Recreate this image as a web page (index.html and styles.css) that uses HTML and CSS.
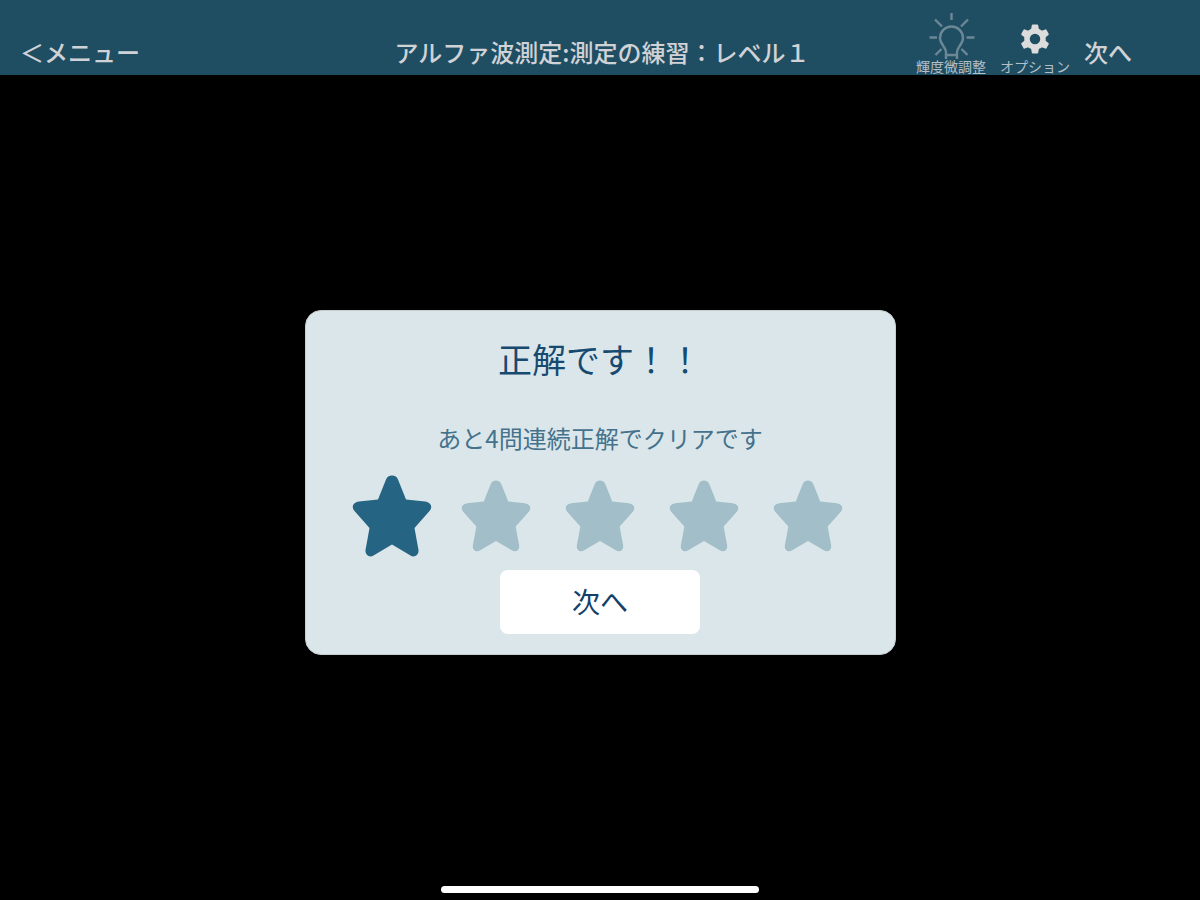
FILE: index.html
```html
<!DOCTYPE html>
<html lang="ja">

<head>
    <meta charset="UTF-8">
    <meta name="viewport" content="width=device-width, initial-scale=1.0">
    <title>アルファ波測定</title>
    <link rel="stylesheet" href="styles.css">
</head>

<body>
    <!-- Header -->
    <header class="header">
        <a class="header-link" href="#menu">＜メニュー</a>
        <h1 class="header-title">アルファ波測定:測定の練習：レベル１</h1>
        <div class="actions">
            <button type="button" class="tool tool-dim">
                <svg class="icon-bulb" viewBox="0 0 48 46" fill="none" stroke="currentColor" stroke-width="2.400">
                    <path d="M19 46V39C19 34 13 31.500 13 25A11.500 11.500 0 0 1 36 25C36 31.500 30 34 30 39V46M19 42H30" />
                    <path d="M24.500 0V7M2.500 24.500H10M39.500 24.500H47.500M8 6.500L15 13.500M41 6.500L34 13.500M8.500 42L14.500 36M40.500 42L34.500 36" />
                </svg>
                <span>輝度微調整</span>
            </button>
            <button type="button" class="tool">
                <svg class="icon-gear" viewBox="0 0 30 30" fill="none" stroke="currentColor">
                    <circle cx="15" cy="15" r="8" stroke-width="5.500" />
                    <g fill="currentColor" stroke-width="2" stroke-linejoin="round">
                        <path id="tooth" d="M12 6L12.800 1.500H17.200L18 6Z" />
                        <use href="#tooth" transform="rotate(60 15 15)" />
                        <use href="#tooth" transform="rotate(120 15 15)" />
                        <use href="#tooth" transform="rotate(180 15 15)" />
                        <use href="#tooth" transform="rotate(240 15 15)" />
                        <use href="#tooth" transform="rotate(300 15 15)" />
                    </g>
                </svg>
                <span>オプション</span>
            </button>
            <a class="header-link" href="#next">次へ</a>
        </div>
    </header>

    <!-- Result -->
    <main class="content">
        <section class="card">
            <h2 class="card-title">正解です！！</h2>
            <p class="card-text">あと4問連続正解でクリアです</p>
            <div class="stars">
                <svg class="star star-on" viewBox="0 0 80 84"><path id="star" d="M40 1.500C43 1.500 45 3 46 5.500L54 25.500L73 27.500C79 28.500 81 33 77.500 37L62.500 54L66.500 76C67 81 62.500 84 58.500 81.500L40 70.500L21.500 81.500C17.500 84 13 81 13.500 76L17.500 54L2.500 37C-1 33 1 28.500 7 27.500L26 25.500L34 5.500C35 3 37 1.500 40 1.500Z" /></svg>
                <svg class="star" viewBox="0 0 80 84"><use href="#star" /></svg>
                <svg class="star" viewBox="0 0 80 84"><use href="#star" /></svg>
                <svg class="star" viewBox="0 0 80 84"><use href="#star" /></svg>
                <svg class="star" viewBox="0 0 80 84"><use href="#star" /></svg>
            </div>
            <button type="button" class="next-button">次へ</button>
        </section>
    </main>

    <!-- Home indicator -->
    <footer class="footer">
        <div class="home-bar"></div>
    </footer>
</body>

</html>
```
FILE: styles.css
```css
* {
    box-sizing: border-box;
}

body {
    font-family: "Noto Sans CJK JP", sans-serif;
    background: #000;
    margin: 0;
    display: flex;
    flex-direction: column;
    min-height: 100vh;
}

button {
    font-family: inherit;
    border: none;
    padding: 0;
    cursor: pointer;
}

/* Header */
.header {
    display: grid;
    grid-template-columns: 1fr auto 1fr;
    align-items: end;
    min-height: 75px;
    padding: 0 16px 2px 20px;
    background: #1f4e63;
    color: #d0d2d6;
}

.header-link,
.header-title {
    margin: 0;
    padding-bottom: 5px;
    font-size: 24px;
    font-weight: 500;
    line-height: 32px;
    color: inherit;
    text-decoration: none;
    white-space: nowrap;
}

.actions {
    display: flex;
    justify-content: flex-end;
    align-items: flex-end;
    gap: 14px;
    padding-right: 52px;
}

.tool {
    display: flex;
    flex-direction: column;
    align-items: center;
    background: none;
    color: #dcdcdc;
    font-size: 14px;
    line-height: 14px;
    white-space: nowrap;
}

.tool span {
    color: #b4bfc8;
}

.tool-dim {
    color: #6c8897;
}

.icon-bulb {
    width: 48px;
    height: 46px;
}

.icon-gear {
    width: 30px;
    height: 30px;
    margin-bottom: 5px;
}

/* Result card */
.content {
    flex: 1;
    display: flex;
    justify-content: center;
    align-items: center;
    padding-top: 4px;
}

.card {
    display: flex;
    flex-direction: column;
    align-items: center;
    width: 100%;
    max-width: 591px;
    padding: 23px 32px 20px;
    border: 1px solid #c4ced2;
    border-radius: 16px;
    background: #dbe6ea;
}

.card-title {
    margin: 0 0 38px;
    font-size: 34px;
    font-weight: 400;
    line-height: 50px;
    color: #164a70;
}

.card-text {
    margin: 0 0 20px;
    font-size: 24px;
    font-weight: 400;
    line-height: 32px;
    color: #44728c;
}

.stars {
    display: grid;
    grid-template-columns: repeat(5, 104px);
    justify-items: center;
    align-items: center;
    margin-bottom: 12px;
}

.star {
    width: 70px;
    height: 74px;
    fill: #a2bfc9;
}

.star-on {
    width: 80px;
    height: 84px;
    fill: #256482;
}

.next-button {
    width: 200px;
    height: 64px;
    padding-bottom: 2px;
    border-radius: 8px;
    background: #fff;
    color: #123f6b;
    font-size: 28px;
}

.footer {
    display: flex;
    justify-content: center;
    padding-bottom: 7px;
}

.home-bar {
    width: 318px;
    height: 7px;
    border-radius: 4px;
    background: #fff;
}
```
